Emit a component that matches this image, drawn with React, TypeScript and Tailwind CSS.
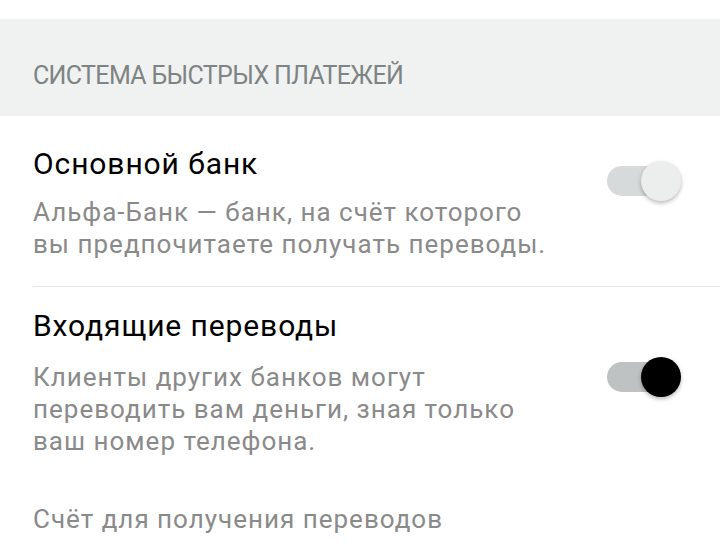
import React from "react";

function Toggle({ on }: { on: boolean }) {
  return (
    <div className="relative h-[42px] w-[74px] shrink-0">
      <div
        className={
          "absolute left-0 top-[6px] h-[30px] w-[64px] rounded-full " +
          (on ? "bg-[#bfc2c2]" : "bg-[#d7dada]")
        }
      />
      <div
        className={
          "absolute right-0 top-[1px] h-[40px] w-[40px] rounded-full shadow-[0_2px_4px_rgba(0,0,0,0.28)] " +
          (on ? "bg-black" : "bg-[#eceeee]")
        }
      />
    </div>
  );
}

export default function App() {
  return (
    <div
      className="h-[550px] w-[720px] overflow-hidden bg-white"
      style={{ fontFamily: "Roboto, 'Noto Sans', sans-serif" }}
    >
      <div className="h-[19px]" />
      <div className="h-[97px] bg-[#eff2f1] pl-[33px] pt-[42px]">
        <div className="text-[25px] leading-[30px] tracking-[-0.65px] text-[#7e8483]">
          СИСТЕМА БЫСТРЫХ ПЛАТЕЖЕЙ
        </div>
      </div>

      <div className="ml-[33px] flex border-b border-[#e6e6e6] pb-[26px] pr-[39px] pt-[30px]">
        <div className="flex-1">
          <div className="text-[30px] leading-[36px] tracking-[0.9px] text-black">Основной банк</div>
          <div className="mt-[14px] text-[26px] leading-[32px] tracking-[1px] text-[#8a8a8a]">
            Альфа-Банк — банк, на счёт которого
            <br />
            вы предпочитаете получать переводы.
          </div>
        </div>
        <div className="mt-[14px]">
          <Toggle on={false} />
        </div>
      </div>

      <div className="ml-[33px] flex pr-[39px] pt-[21px]">
        <div className="flex-1">
          <div className="text-[30px] leading-[36px] tracking-[0.9px] text-black">Входящие переводы</div>
          <div className="mt-[17px] text-[26px] leading-[32px] tracking-[1px] text-[#8a8a8a]">
            Клиенты других банков могут
            <br />
            переводить вам деньги, зная только
            <br />
            ваш номер телефона.
          </div>
        </div>
        <div className="mt-[48px]">
          <Toggle on={true} />
        </div>
      </div>

      <div className="ml-[33px] mt-[46px] text-[26px] leading-[32px] tracking-[1px] text-[#8a8a8a]">
        Счёт для получения переводов
      </div>
    </div>
  );
}
